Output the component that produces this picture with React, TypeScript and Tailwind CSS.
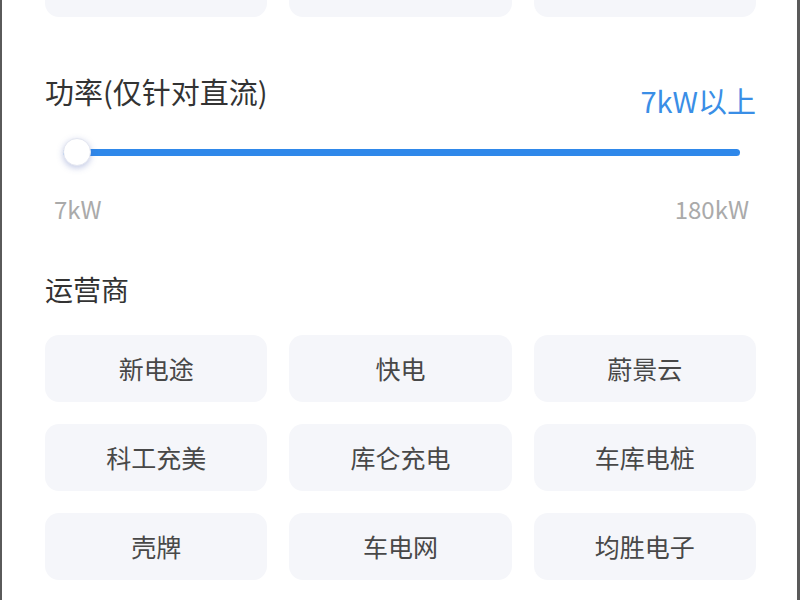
const operators = ["新电途", "快电", "蔚景云", "科工充美", "库仑充电", "车库电桩", "壳牌", "车电网", "均胜电子"];

function Chip({ label }: { label: string }) {
  return (
    <div className="h-[67px] rounded-[14px] bg-[#f5f6fa] flex items-center justify-center text-[25px] text-[#484848]">
      {label}
    </div>
  );
}

export default function App() {
  return (
    <div
      className="w-[800px] h-[600px] overflow-hidden bg-white border-l-2 border-r-[3px] border-[#5a5a5a]"
      style={{ fontFamily: '"Noto Sans CJK SC", "Noto Sans", sans-serif' }}
    >
      <div className="pl-[43px] pr-[41px]">
        {/* previous section, scrolled off */}
        <div className="grid grid-cols-3 gap-[22px] -mt-[50px]">
          <Chip label="" />
          <Chip label="" />
          <Chip label="" />
        </div>

        {/* power */}
        <div className="flex justify-between items-start mt-[54px]">
          <h2 className="text-[29px] leading-[40px] text-[#333]">功率(仅针对直流)</h2>
          <span className="text-[29px] leading-[40px] text-[#3a8ee6] pt-[9px]">7kW以上</span>
        </div>

        <div className="relative mt-[18px] h-[28px] flex items-center pl-[18px] pr-[16px]">
          <div className="h-[7px] w-full rounded-full bg-[#2f88ea]" />
          <div className="absolute left-[18px] top-0 w-[28px] h-[28px] rounded-full bg-white border border-[#e3e6f0] shadow-[0_2px_6px_rgba(80,100,180,0.35)]" />
        </div>

        <div className="flex justify-between mt-[27px] pl-[9px] pr-[7px] text-[24px] leading-[32px] text-[#aaa]">
          <span>7kW</span>
          <span>180kW</span>
        </div>

        {/* operators */}
        <h2 className="mt-[44px] text-[28px] leading-[40px] text-[#333]">运营商</h2>

        <div className="grid grid-cols-3 gap-x-[22px] gap-y-[22px] mt-[26px]">
          {operators.map((o) => (
            <Chip key={o} label={o} />
          ))}
        </div>
      </div>
    </div>
  );
}
